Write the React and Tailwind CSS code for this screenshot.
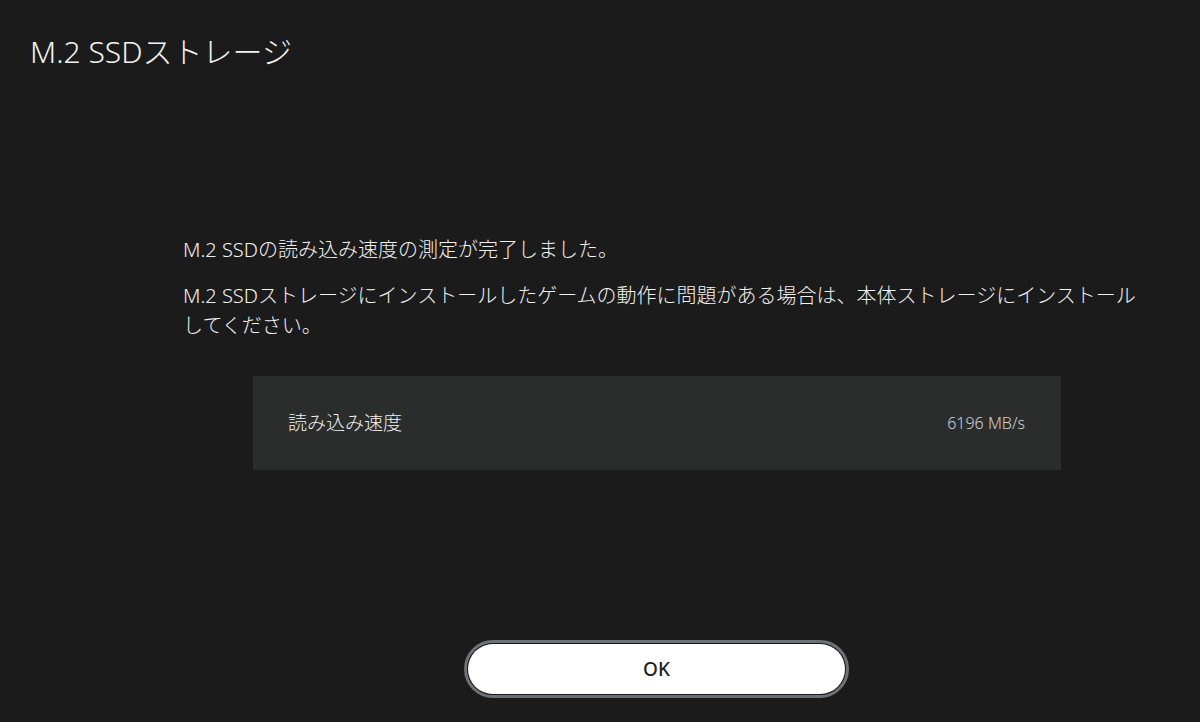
import React from 'react';

const font = { fontFamily: '"Noto Sans", "Noto Sans CJK JP", sans-serif' };

export default function App() {
  return (
    <div className="w-[1200px] h-[722px] bg-[#1b1b1b] text-[#f2f2f2] flex flex-col overflow-hidden" style={font}>
      {/* Header */}
      <div className="pt-[35px] pl-[30px] h-[100px]">
        <h1 className="text-[30px] leading-[34px] font-light">M.2 SSDストレージ</h1>
      </div>

      {/* Body */}
      <div className="pl-[183px] pt-[135px] w-[1133px]">
        <div className="w-[962px] text-[20px] leading-[30px] font-light">
          <p>M.2 SSDの読み込み速度の測定が完了しました。</p>
          <p className="mt-[16px]">
            M.2 SSDストレージにインストールしたゲームの動作に問題がある場合は、本体ストレージにインストールしてください。
          </p>
        </div>

        <div className="mt-[35px] ml-[70px] w-[808px] h-[94px] bg-[#2b2c2c] flex items-center justify-between pl-[35px] pr-[36px]">
          <span className="text-[19px] font-light">読み込み速度</span>
          <span className="text-[16px] font-light text-[#cfcfcf]">6196 MB/s</span>
        </div>
      </div>

      {/* Footer button */}
      <div className="flex justify-center pl-[113px] mt-[170px]">
        <button className="w-[385px] h-[58px] rounded-full border-[3px] border-[#6c7177] p-[1px] bg-[#1b1b1b]">
          <span className="flex w-full h-full items-center justify-center rounded-full bg-white text-[#1f1f1f] text-[19px] font-medium">
            OK
          </span>
        </button>
      </div>
    </div>
  );
}
